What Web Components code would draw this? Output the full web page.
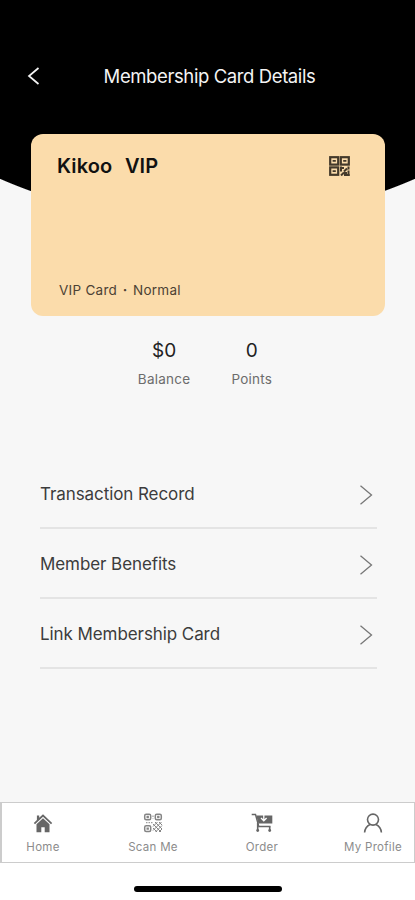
<!DOCTYPE html>
<html lang="en">
<head>
<meta charset="utf-8">
<meta name="viewport" content="width=device-width, initial-scale=1">
<title>Membership Card Details</title>
<style>
  html, body {
    margin: 0;
    height: 100%;
    background: #fff;
    font-family: Inter, "Liberation Sans", sans-serif;
  }
</style>
</head>
<body>
<membership-page>
  <page-header slot="header">Membership Card Details</page-header>
  <member-card slot="card" holder="Kikoo&nbsp; VIP">VIP Card <b>·</b> Normal</member-card>
  <stat-item slot="stats" label="Balance">$0</stat-item>
  <stat-item slot="stats" label="Points">0</stat-item>
  <menu-row>Transaction Record</menu-row>
  <menu-row>Member Benefits</menu-row>
  <menu-row>Link Membership Card</menu-row>
  <tab-bar slot="tabs">
    <tab-item icon="home">Home</tab-item>
    <tab-item icon="scan">Scan Me</tab-item>
    <tab-item icon="cart">Order</tab-item>
    <tab-item icon="user">My Profile</tab-item>
  </tab-bar>
</membership-page>

<script>
const ICONS = {
  home: `<svg width="20" height="20" viewBox="0 0 20 20" fill="#666">
      <path d="M10 1.2 6.2 4.800V2.500H3.900v4.500L.8 10l1.200 1.300L10 3.800l8 7.500 1.200-1.300z"/>
      <path d="M10 5.200 3.500 11.300v7.900h4.800v-5h3.400v5h4.800v-7.900z"/>
    </svg>`,
  scan: `<svg width="20" height="20" viewBox="0 0 20 20" fill="none" stroke="#858585">
      <rect x="1.700" y="1.200" width="6" height="5.600" rx="1.500" stroke-width="1.500"/>
      <rect x="12.300" y="1.200" width="6" height="5.600" rx="1.500" stroke-width="1.500"/>
      <rect x="1.700" y="12.800" width="6" height="5.600" rx="1.500" stroke-width="1.500"/>
      <path d="M3.500 4h2.400M14.100 4h2.400M3.500 15.600h2.400" stroke-width="2.400"/>
      <path d="M3 9.700h7M10 2.500v3" stroke-width="1" stroke-dasharray="1.500 1"/>
      <path d="M10 13.500l4.500-4.500M10 17.500l8.500-8.500M12.500 19l6.500-6.500M16 19l3-3M10 11l8 8M10 15l4 4M12 9l7 7M16 9l3 3" stroke-width="1"/>
    </svg>`,
  cart: `<svg width="22" height="20" viewBox="0 0 22 20" fill="none" stroke="#666" stroke-width="1.400">
      <path d="M.7 1.500h3.800l3.300 12h11.700"/>
      <path d="M5.200 2.500H21.300v8H7.400z" fill="#666" stroke="none"/>
      <path d="M12.800 2v5.500M10 5l2.800 2.800L15.600 5" stroke="#fff" stroke-width="1.300"/>
      <path d="M6.700 10v8M18.700 13.500v4" stroke-width="1.600"/>
      <circle cx="6.700" cy="17.500" r="1.400" fill="#666" stroke="none"/>
      <circle cx="18.700" cy="17.500" r="1.400" fill="#666" stroke="none"/>
    </svg>`,
  user: `<svg width="20" height="20" viewBox="0 0 20 20" fill="none" stroke="#666" stroke-width="1.600">
      <circle cx="10" cy="6.600" r="5.500"/>
      <path d="M1.600 19.500c.3-3.900 2.300-6.500 5.400-8M18.400 19.500c-.3-3.900-2.300-6.500-5.400-8"/>
    </svg>`
};

class MembershipPage extends HTMLElement {
  constructor() {
    super();
    this.attachShadow({ mode: 'open' }).innerHTML = `
      <style>
        :host {
          display: flex;
          flex-direction: column;
          height: 900px;
          background: #fff;
        }

        /* the black area ends in a wide arc behind the card */
        main {
          display: flex;
          flex-direction: column;
          height: 802px;
          background: radial-gradient(circle at 50% -298px, #000 519.5px, #f7f7f7 520.5px);
        }

        .card {
          padding: 0 30px 0 31px;
        }

        .stats {
          display: flex;
          justify-content: center;
          gap: 41px;
          box-sizing: border-box;
          height: 143px;
          padding-top: 22px;
          margin-right: 5px;
        }

        .menu {
          padding: 0 38px 0 40px;
        }

        .home-indicator {
          width: 148px;
          height: 6px;
          margin: 23px auto 0;
          border-radius: 3px;
          background: #000;
        }
      </style>
      <main>
        <slot name="header"></slot>
        <div class="card"><slot name="card"></slot></div>
        <div class="stats"><slot name="stats"></slot></div>
        <div class="menu"><slot></slot></div>
      </main>
      <slot name="tabs"></slot>
      <div class="home-indicator"></div>
    `;
  }
}

class PageHeader extends HTMLElement {
  constructor() {
    super();
    this.attachShadow({ mode: 'open' }).innerHTML = `
      <style>
        :host {
          display: grid;
          grid-template-columns: 64px 1fr 60px;
          align-items: center;
          box-sizing: border-box;
          height: 134px;
          padding-top: 18px;
          color: #f4f4f4;
        }

        svg {
          margin-left: 27px;
        }

        h1 {
          margin: 0;
          font-size: 18.5px;
          font-weight: 400;
          letter-spacing: -0.4px;
          text-align: center;
          white-space: nowrap;
        }
      </style>
      <svg width="13" height="18" viewBox="0 0 13 18" fill="none" stroke="#f4f4f4" stroke-width="1.7">
        <path d="M11.5 1 2 9l9.5 8"/>
      </svg>
      <h1><slot></slot></h1>
    `;
  }
}

class MemberCard extends HTMLElement {
  constructor() {
    super();
    this.attachShadow({ mode: 'open' }).innerHTML = `
      <style>
        :host {
          display: flex;
          flex-direction: column;
          justify-content: space-between;
          box-sizing: border-box;
          height: 182px;
          padding: 20px 35px 17px 26px;
          border-radius: 12px;
          background: #fbdcab;
        }

        .top {
          display: flex;
          justify-content: space-between;
          align-items: center;
        }

        h2 {
          margin: 0;
          font-size: 20px;
          line-height: 24px;
          font-weight: 600;
          letter-spacing: 0.1px;
          word-spacing: 1.2px;
          color: #111;
        }

        p {
          margin: 0 0 0 2px;
          font-size: 13.5px;
          line-height: 18px;
          letter-spacing: 0.27px;
          color: #4c4234;
        }

        ::slotted(b) {
          margin: 0 1.5px;
        }
      </style>
      <div class="top">
        <h2>${this.getAttribute('holder')}</h2>
        <svg width="21" height="20" viewBox="0 0 21 20" fill="none" stroke="#43392a">
          <rect x="1.2" y="1.2" width="8" height="7.4" stroke-width="2.2"/>
          <rect x="11.8" y="1.2" width="8" height="7.4" stroke-width="2.2"/>
          <rect x="1.2" y="11.4" width="8" height="7.4" stroke-width="2.2"/>
          <path d="M3.6 4.900h3.200M14.200 4.900h3.200M3.600 15.100h3.200" stroke-width="1.800"/>
          <path d="M12 10.500v5M11 12h4M15 15.500l3-3M19.500 10.500v3M12 19.500l3-3M15 17h3M15 19h5.800M19.500 14.500v5" stroke-width="2"/>
        </svg>
      </div>
      <p><slot></slot></p>
    `;
  }
}

class StatItem extends HTMLElement {
  constructor() {
    super();
    this.attachShadow({ mode: 'open' }).innerHTML = `
      <style>
        :host {
          display: flex;
          flex-direction: column;
          align-items: center;
        }

        .value {
          font-size: 19px;
          line-height: 26px;
          color: #222;
        }

        .label {
          margin-top: 6px;
          font-size: 13.5px;
          line-height: 18px;
          letter-spacing: 0.25px;
          color: #6c6c6c;
        }
      </style>
      <span class="value"><slot></slot></span>
      <span class="label">${this.getAttribute('label')}</span>
    `;
  }
}

class MenuRow extends HTMLElement {
  constructor() {
    super();
    this.attachShadow({ mode: 'open' }).innerHTML = `
      <style>
        :host {
          display: flex;
          justify-content: space-between;
          align-items: center;
          box-sizing: border-box;
          height: 70px;
          padding: 4px 4px 0 0;
          border-bottom: 2px solid #e4e4e4;
          font-size: 17px;
          letter-spacing: -0.08px;
          color: #3c3c3c;
        }

        span {
          padding-bottom: 3px;
        }
      </style>
      <span><slot></slot></span>
      <svg width="14" height="20" viewBox="0 0 14 20" fill="none" stroke="#777" stroke-width="1.3">
        <path d="M1.500.7 12.500 10l-11 9.300"/>
      </svg>
    `;
  }
}

class TabBar extends HTMLElement {
  constructor() {
    super();
    this.attachShadow({ mode: 'open' }).innerHTML = `
      <style>
        :host {
          display: grid;
          grid-template-columns: 82px 138px 80px 82px;
          box-sizing: border-box;
          height: 61px;
          border: 1px solid #ccc;
          border-left-width: 2px;
          background: #fff;
        }

        ::slotted(:last-child) {
          margin: 0 -30px 0 30px;
        }
      </style>
      <slot></slot>
    `;
  }
}

class TabItem extends HTMLElement {
  constructor() {
    super();
    this.attachShadow({ mode: 'open' }).innerHTML = `
      <style>
        :host {
          display: flex;
          flex-direction: column;
          align-items: center;
          gap: 6px;
          padding-top: 10px;
          font-size: 11.5px;
          line-height: 17px;
          letter-spacing: 0.3px;
          color: #8c8c8c;
          white-space: nowrap;
        }
      </style>
      ${ICONS[this.getAttribute('icon')]}
      <span><slot></slot></span>
    `;
  }
}

customElements.define('membership-page', MembershipPage);
customElements.define('page-header', PageHeader);
customElements.define('member-card', MemberCard);
customElements.define('stat-item', StatItem);
customElements.define('menu-row', MenuRow);
customElements.define('tab-bar', TabBar);
customElements.define('tab-item', TabItem);
</script>
</body>
</html>
